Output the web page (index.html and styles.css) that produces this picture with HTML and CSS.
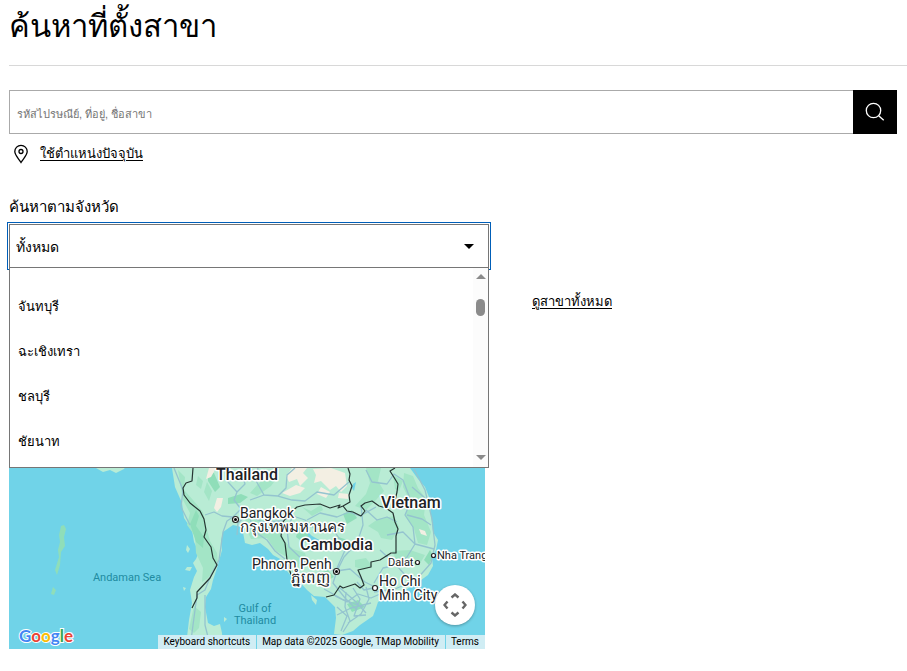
FILE: index.html
```html
<!DOCTYPE html>
<html lang="th">
<head>
<meta charset="UTF-8">
<meta name="viewport" content="width=device-width, initial-scale=1">
<title>ค้นหาที่ตั้งสาขา</title>
<link rel="stylesheet" href="styles.css">
</head>
<body>

<main class="page">
  <h1>ค้นหาที่ตั้งสาขา</h1>

  <form class="search">
    <div class="search-bar">
      <input type="text" class="search-input" aria-label="ค้นหาสาขา" placeholder="รหัสไปรษณีย์, ที่อยู่, ชื่อสาขา">
      <button type="submit" class="search-button" aria-label="ค้นหา">
        <svg width="24" height="24" viewBox="0 0 24 24" fill="none" stroke="#fff" stroke-width="1.3">
          <circle cx="10.5" cy="10.5" r="7.2"/>
          <path d="M15.7 15.7L20.7 20.3"/>
        </svg>
      </button>
    </div>
    <div class="locate">
      <svg width="24" height="24" viewBox="0 0 24 24" fill="none" stroke="#000" stroke-width="1.3">
        <path d="M12 20.5C10 17 5.8 13.2 5.8 9.5A6.2 6.2 0 0 1 18.2 9.5C18.2 13.2 14 17 12 20.5Z"/>
        <circle cx="12" cy="9.5" r="2"/>
      </svg>
      <a href="#">ใช้ตำแหน่งปัจจุบัน</a>
    </div>

    <label class="province-label" for="province">ค้นหาตามจังหวัด</label>
    <div class="province">
      <select id="province" class="province-select">
        <option>ทั้งหมด</option>
        <option>จันทบุรี</option>
        <option>ฉะเชิงเทรา</option>
        <option>ชลบุรี</option>
        <option>ชัยนาท</option>
      </select>
      <div class="province-menu">
        <ul class="province-list" role="listbox" aria-label="จังหวัด">
          <li role="option">จันทบุรี</li>
          <li role="option">ฉะเชิงเทรา</li>
          <li role="option">ชลบุรี</li>
          <li role="option">ชัยนาท</li>
        </ul>
        <div class="scrollbar">
          <span class="scroll-up"></span>
          <span class="scroll-thumb"></span>
          <span class="scroll-down"></span>
        </div>
      </div>
    </div>
  </form>

  <div class="results">
    <div class="map">
      <svg class="map-canvas" viewBox="9 292 476 357" preserveAspectRatio="xMidYMax slice">
        <rect class="sea" x="9" y="292" width="476" height="357"/>

        <!-- mainland -->
        <path class="land" d="M160 292L168 440 172 468 175 487 182 503 184 518 192 530 194 542 199 552 196 559 193 563 197 571 194 577 190 590 192 603 189 620 187 637 186 649H223L222 633 220 624 214 626 208 623 205 607 206 597 211 589 213 580 218 565 222 550 221 541 223 532 233 525 242 527 245 543 252 545 260 543 268 549 273 555 282 560 287 571 292 577 298 580 307 590 314 596 325 597 335 607 336 618 334 634 342 635 353 631 360 625 373 616 376 608 378 602 387 597 404 591 417 583 428 575 433 566 432 558 436 550 438 540 433 532 432 523 430 508 429 497 425 487 418 479 410 468 400 440V292Z"/>
        <path class="land" d="M96 468L103 472 110 470 116 473 124 469 126 466H96ZM187 545L190 549 188 553 186 550ZM187 567L192 567 190 571 185 570ZM311 595L317 600 316 605 312 600ZM224 617L227 619 224 622ZM183 587L186 588 184 591Z"/>
        <path class="wood" d="M64 525L66 529 64 537 65 546 61 552 60 565 57 575 55 570 59 557 58 550 60 542 59 535 61 526ZM53 587L56 590 54 595 51 594Z"/>

        <!-- forests -->
        <path class="forest" d="M178 470L185 477 184 490 193 500 203 512 207 530 210 541 217 553 218 564 208 578 202 582 203 568 196 553 195 536 187 525 190 513 183 500ZM194 606L201 612 199 628 194 633 189 629ZM198 476L203 481 201 489 196 485ZM207 482L212 491 209 501 204 492ZM245 515L258 511 268 518 279 524 284 541 293 549 305 553 307 560 299 564 300 571 291 569 287 557 276 551 267 538 251 539 246 528ZM366 468L381 468 378 481 384 491 376 500 366 510 355 506 366 494 370 483ZM404 473L413 476 418 488 426 499 424 515 431 532 427 545 418 543 414 529 405 516 410 501 403 487ZM393 475L403 481 399 491 395 489ZM368 526L378 519 394 516 399 527 392 540 381 538 378 532ZM392 551L410 550 425 555 419 565 404 567 397 561ZM257 485L265 478 277 478 271 486 257 496 250 493ZM302 507L311 511 321 505 323 510 312 516ZM355 560L366 558 372 566 364 570 355 567Z"/>
        <path class="wood" d="M196 510L199 516 196 526 204 537 203 548 196 542 190 524ZM208 471L214 473 220 487 215 492 208 481ZM228 498L241 494 248 497 240 503 228 504ZM299 526L307 532 311 540 304 543 296 537ZM343 514L352 510 357 518 347 524ZM317 574L328 570 334 577 322 583ZM347 604L358 600 365 607 352 612ZM335 536L351 541 354 550 343 546ZM430 550L433 556 429 565 424 560Z"/>

        <!-- plains -->
        <path class="plain" d="M217 498L223 498 221 507 217 512 214 508ZM209 468H216L211 477 206 479ZM292 468H307L303 473 308 478 300 486 297 479 289 482 286 476ZM313 469L331 468 345 473 347 486 341 492 336 486 330 490 321 481 314 483 316 475ZM296 485L305 488 300 493 290 496 282 493ZM321 487L330 492 326 498 317 494ZM339 493L349 494 348 499 338 498ZM419 529L425 531 427 536 421 534Z"/>

        <!-- lakes -->
        <path class="sea" d="M307 531L312 536 321 541 325 549 319 547 309 539ZM353 484L356 482 354 491 352 488Z"/>

        <!-- roads and rivers -->
        <path class="road" d="M174 468L183 490 181 507 190 525M205 515L214 512 222 516 233 517 241 509 234 500 237 492 228 482 231 470M233 517L227 521 223 532 219 560 211 575 205 590 197 595 195 610 190 648M205 595V625L211 649M237 492L245 484 242 474M241 509L250 515 252 530 267 540 275 551 285 559M250 500L264 495 278 496 286 488 287 475 295 468M278 496L292 500 305 501 317 492 334 495 349 482M258 468L255 479 264 495M245 514L263 522 282 521 293 516 305 520 315 529 334 531 346 548 337 568M293 516L287 529 289 547 305 562 319 567 336 571 350 569 365 582 375 587M361 505L363 525 357 543 344 557 337 571 333 583 345 598 357 610M366 470L372 482 387 484 394 474 403 480 411 501 405 515 413 527 415 544 407 557 397 565 383 568 374 583M407 515L422 519 431 525M412 487L425 498M414 469L425 490 432 519 435 545 431 563 416 580 395 589 374 592M387 535L403 532 415 544 434 549M380 550L397 566 407 577M366 510L377 520 387 517 397 522"/>
        <path class="road" d="M335 596L347 602 358 594 371 598 380 594M340 588L355 601 366 613M337 607L347 616 341 631M346 592L345 607 350 621 343 632M353 588L360 599 354 616 366 615M366 587L369 599 361 614 348 623M337 615L351 608 371 603M324 589L342 599 363 607M357 582L364 590 378 587M237 535L238 523 246 516M307 520L320 513 337 517 349 512 360 516 376 507"/>

        <!-- borders -->
        <path class="border" d="M193 468L192 481 186 483 183 488 184 495 190 503 200 511 204 519 206 530 204 537 211 547 213 558 217 565 210 578 197 592 197 598 192 608"/>
        <path class="border" d="M348 468L350 474 349 480 352 486 349 495 350 502 343 506 338 508 340 505 330 508 320 504 305 505 297 507 289 514 283 522 281 536 285 543 287 560 291 575"/>
        <path class="border" d="M395 468L390 471 395 479 398 484 397 492 395 501M343 506L347 511 353 512 361 516 365 511 361 506 365 503 372 501 379 506 386 508 393 513 395 522 398 529 396 536 396 553 391 553 380 560 371 562 371 567 358 570 361 577 364 585 360 588 355 584 343 588 340 586 334 595 326 597"/>

        <g class="town">
          <circle cx="235.5" cy="519.5" r="3"/>
          <circle cx="336.5" cy="571.5" r="3"/>
          <circle cx="375" cy="588" r="2.5"/>
          <circle cx="417.5" cy="562.5" r="2"/>
          <circle cx="433.5" cy="555.5" r="2"/>
        </g>
        <circle cx="235.5" cy="519.5" r="1.5"/>
        <circle cx="336.5" cy="571.5" r="1.5"/>

        <g class="country">
          <text x="216" y="480">Thailand</text>
          <text x="381" y="508">Vietnam</text>
          <text x="300" y="550">Cambodia</text>
        </g>
        <g class="city">
          <text x="240" y="518">Bangkok</text>
          <text class="local" x="240" y="532">กรุงเทพมหานคร</text>
          <text x="252" y="569">Phnom Penh</text>
          <text class="local" x="291" y="583">ភ្នំពេញ</text>
          <text x="379" y="586">Ho Chi</text>
          <text x="379" y="600">Minh City</text>
        </g>
        <g class="city small">
          <text x="388" y="566">Dalat</text>
          <text x="437" y="559">Nha Trang</text>
        </g>
        <g class="water">
          <text x="127" y="581">Andaman Sea</text>
          <text x="255" y="612">Gulf of</text>
          <text x="255" y="624">Thailand</text>
        </g>
      </svg>

      <button type="button" class="map-camera" aria-label="Map camera controls">
        <svg width="24" height="24" viewBox="0 0 24 24" fill="none" stroke="#666" stroke-width="2.4">
          <path d="M8.5 4.5L12 1.5 15.5 4.5M8.5 19.5L12 22.5 15.5 19.5M4.5 8.5L1.5 12 4.5 15.5M19.5 8.5L22.5 12 19.5 15.5"/>
        </svg>
      </button>

      <a class="google" href="#" aria-label="Google">
        <svg width="60" height="24" viewBox="0 0 60 24">
          <text x="1" y="17"><tspan fill="#4285f4">G</tspan><tspan fill="#ea4335">o</tspan><tspan fill="#fbbc04">o</tspan><tspan fill="#4285f4">g</tspan><tspan fill="#34a853">l</tspan><tspan fill="#ea4335">e</tspan></text>
        </svg>
      </a>

      <div class="map-footer">
        <button type="button">Keyboard shortcuts</button>
        <span>Map data ©2025 Google, TMap Mobility</span>
        <a href="#">Terms</a>
      </div>
    </div>

    <a class="all-branches" href="#">ดูสาขาทั้งหมด</a>
  </div>
</main>

</body>
</html>
```
FILE: styles.css
```css
* {
  box-sizing: border-box;
}

body {
  margin: 0;
  background: #fff;
  color: #000;
  font-family: "Liberation Sans", sans-serif;
  font-size: 13px;
  line-height: 20px;
}

a {
  color: #000;
  text-underline-offset: 2px;
}

.page {
  padding-left: 9px;
}

h1 {
  margin: 0;
  padding: 5px 0 16px;
  border-bottom: 1px solid #d8d8d8;
  font-size: 31px;
  font-weight: 400;
  line-height: 44px;
}

.search {
  padding: 24px 10px 0 0;
}

.search-bar {
  display: flex;
  height: 44px;
}

.search-input {
  flex: 1;
  min-width: 0;
  padding: 3px 7px 0;
  border: 1px solid #aaa;
  border-right: 0;
  border-radius: 0;
  font: inherit;
  font-size: 11px;
}

.search-input::placeholder {
  color: #757575;
}

.search-button {
  display: flex;
  align-items: center;
  justify-content: center;
  width: 44px;
  padding: 0;
  border: 0;
  background: #000;
  cursor: pointer;
}

.locate {
  display: flex;
  align-items: center;
  gap: 7px;
  height: 40px;
}

.province-label {
  display: block;
  margin: 23px 0 7px;
  font-size: 15px;
}

.province {
  position: relative;
  max-width: 480px;
}

.province-select {
  display: block;
  width: 100%;
  height: 44px;
  padding: 2px 6px 0;
  border: 1px solid #767676;
  border-radius: 0;
  outline: 1px solid #005eb8;
  outline-offset: 1px;
  appearance: none;
  background: #fff;
  color: #000;
  font: inherit;
  font-size: 14px;
}

/* arrow */
.province::after {
  content: "";
  position: absolute;
  top: 20px;
  right: 15px;
  border: 5px solid transparent;
  border-top-color: #000;
  border-bottom: 0;
}

.province-menu {
  position: absolute;
  z-index: 2;
  top: 43px;
  left: 0;
  right: 0;
  display: flex;
  height: 201px;
  border: 1px solid #767676;
  background: #fff;
}

.province-list {
  flex: 1;
  margin: 0;
  padding: 16px 0 0;
  list-style: none;
}

.province-list li {
  padding: 0 8px;
  line-height: 45px;
}

.scrollbar {
  display: flex;
  flex-direction: column;
  align-items: center;
  width: 15px;
  padding: 6px 0 7px;
  background: #fcfcfc;
}

.scroll-up,
.scroll-down {
  border: 5px solid transparent;
}

.scroll-up {
  border-top: 0;
  border-bottom-color: #8b8b8b;
}

.scroll-down {
  margin-top: auto;
  border-bottom: 0;
  border-top-color: #8b8b8b;
}

.scroll-thumb {
  width: 9px;
  height: 17px;
  margin-top: 20px;
  border-radius: 5px;
  background: #8b8b8b;
}

.results {
  display: flex;
  align-items: flex-start;
  gap: 47px;
  margin-top: 24px;
}

.map {
  position: relative;
  flex: 0 1 476px;
  overflow: hidden;
  font-family: Roboto, "Liberation Sans", sans-serif;
}

.map-canvas {
  display: block;
  width: 100%;
}

.sea {
  fill: #70d3e8;
}

.land {
  fill: #b9ecd5;
}

.forest {
  fill: #a3e5c6;
}

.wood {
  fill: #8fdeb9;
}

.plain {
  fill: #f3efe3;
}

.road {
  fill: none;
  stroke: #94c4cf;
  stroke-width: 1.3;
  stroke-linejoin: round;
}

.border {
  fill: none;
  stroke: #263532;
  stroke-width: 1.2;
  stroke-linejoin: round;
}

.town {
  fill: #fff;
  stroke: #222;
  stroke-width: 1.2;
}

.country,
.city {
  fill: #202124;
  stroke: #fff;
  stroke-width: 3px;
  stroke-linejoin: round;
  paint-order: stroke;
}

.country {
  font-size: 16px;
  font-weight: 500;
}

.city {
  font-size: 14px;
}

.city .local {
  font-size: 15px;
}

.city.small {
  font-size: 11px;
}

.water {
  fill: #218ba1;
  font-size: 11px;
  text-anchor: middle;
}

.map-camera {
  position: absolute;
  right: 10px;
  bottom: 24px;
  display: flex;
  align-items: center;
  justify-content: center;
  width: 40px;
  height: 40px;
  padding: 0;
  border: 0;
  border-radius: 50%;
  background: #fff;
  box-shadow: 0 1px 3px rgba(0, 0, 0, 0.3);
  cursor: pointer;
}

.google {
  position: absolute;
  left: 9px;
  bottom: 0;
  height: 24px;
}

.google text {
  font-family: Lato, sans-serif;
  font-size: 17px;
  font-weight: 700;
  stroke: #fff;
  stroke-width: 2px;
  paint-order: stroke;
}

.map-footer {
  position: absolute;
  right: 0;
  bottom: 0;
  display: flex;
  gap: 1px;
  font-size: 10px;
  line-height: 14px;
}

.map-footer > * {
  padding: 0 6px 0 5px;
  border: 0;
  background: #d0edf4;
  color: #000;
  font: inherit;
  text-decoration: none;
  white-space: nowrap;
}

.all-branches {
  white-space: nowrap;
}
```
